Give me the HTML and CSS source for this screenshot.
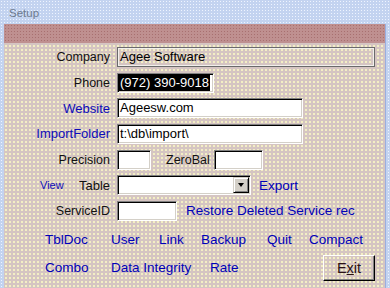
FILE: index.html
```html
<!DOCTYPE html>
<html>
<head>
  <title>Setup</title>
  <link rel="stylesheet" href="styles.css">
</head>
<body>
  <div class="window">
    <div class="titlebar">Setup</div>
    <div class="client">
      <div class="band"></div>

      <div class="rows">
        <div class="row">
          <div class="label">Company</div>
          <div class="field locked company">Agee Software</div>
        </div>
        <div class="row">
          <div class="label">Phone</div>
          <div class="field phone"><span class="selected">(972) 390-9018</span></div>
        </div>
        <div class="row">
          <div class="label link">Website</div>
          <div class="field wide">Ageesw.com</div>
        </div>
        <div class="row">
          <div class="label link">ImportFolder</div>
          <div class="field wide">t:\db\import\</div>
        </div>
        <div class="row">
          <div class="label">Precision</div>
          <div class="field precision"></div>
          <div class="label-inline">ZeroBal</div>
          <div class="field zerobal"></div>
        </div>
        <div class="row">
          <div class="label split"><span class="view">View</span><span>Table</span></div>
          <div class="field combo">
            <div class="combo-btn"><span class="arrow"></span></div>
          </div>
          <span class="action export">Export</span>
        </div>
        <div class="row">
          <div class="label">ServiceID</div>
          <div class="field serviceid"></div>
          <span class="action restore">Restore Deleted Service rec</span>
        </div>
      </div>

      <div class="links top">
        <span class="action">TblDoc</span>
        <span class="action">User</span>
        <span class="action">Link</span>
        <span class="action">Backup</span>
        <span class="action">Quit</span>
        <span class="action">Compact</span>
      </div>
      <div class="links bottom">
        <span class="action">Combo</span>
        <span class="action">Data Integrity</span>
        <span class="action">Rate</span>
        <button class="exit">E<u>x</u>it</button>
      </div>
    </div>
  </div>
</body>
</html>
```

FILE: styles.css
```css
html, body {
  margin: 0;
  padding: 0;
}

body {
  width: 390px;
  height: 288px;
  overflow: hidden;
  font-family: "Liberation Sans", Arial, sans-serif;
}

.window {
  height: 288px;
  display: flex;
  flex-direction: column;
  background-color: #c3d3f0;
  background-image: radial-gradient(circle, #eef4ff 0.9px, transparent 1px);
  background-size: 3px 3px;
}

.titlebar {
  height: 24px;
  box-sizing: border-box;
  padding: 5px 0 0 9px;
  font-size: 11.5px;
  line-height: 16px;
  color: #6d7a8e;
}

.client {
  flex: 1;
  margin: 0 5px 0 4px;
  background-color: #d5c5c2;
  background-image: radial-gradient(circle, #f3efc4 0.9px, transparent 1.1px);
  background-size: 4px 4px;
  box-shadow: 1px 0 0 #9aaee0;
}

.band {
  height: 19px;
  background-color: #bf9090;
  background-image: radial-gradient(circle, #a87070 0.9px, transparent 1px);
  background-size: 3px 3px;
}

.rows {
  margin-top: 4px;
  display: flex;
  flex-direction: column;
  gap: 5.67px;
}

.row {
  display: flex;
  align-items: center;
  height: 20px;
}

.label {
  width: 113px;
  box-sizing: border-box;
  padding-right: 7px;
  text-align: right;
  font-size: 12.5px;
  color: #111;
}

.label.link {
  font-size: 13px;
  color: #0c0cb8;
}

.label.split {
  display: flex;
  justify-content: space-between;
  align-items: center;
  padding-left: 36px;
  font-size: 13px;
}

.view {
  font-size: 11px;
  color: #0c0cb8;
}

.label-inline {
  margin-left: 15px;
  margin-right: 4px;
  font-size: 12.5px;
  color: #111;
}

.field {
  position: relative;
  height: 20px;
  box-sizing: border-box;
  padding-left: 2px;
  font-size: 13px;
  line-height: 17px;
  color: #000;
  background: #fff;
  border: 1px solid;
  border-color: #808080 #fff #fff #808080;
  box-shadow: inset 1px 1px #000, inset -1px -1px #d4d0c8;
}

.field.locked {
  background: transparent;
  border-color: #6a6a6a;
  box-shadow: inset 1px 1px #f2f0ec, inset -1px -1px #f2f0ec;
}

.company {
  width: 258px;
}

.phone {
  width: 97px;
  padding-left: 1px;
}

.selected {
  display: inline-block;
  padding: 0 1px;
  margin-top: 1px;
  line-height: 16px;
  background: #000;
  color: #fff;
}

.wide {
  width: 186px;
}

.precision {
  width: 34px;
}

.zerobal {
  width: 49px;
}

.combo {
  width: 134px;
}

.combo-btn {
  position: absolute;
  top: 1px;
  right: 1px;
  width: 16px;
  height: 16px;
  box-sizing: border-box;
  background: #d4d0c8;
  border: 1px solid;
  border-color: #d4d0c8 #000 #000 #d4d0c8;
  box-shadow: inset 1px 1px #fff, inset -1px -1px #808080;
  display: flex;
  align-items: center;
  justify-content: center;
}

.arrow {
  width: 0;
  height: 0;
  border-left: 3.5px solid transparent;
  border-right: 3.5px solid transparent;
  border-top: 4px solid #000;
}

.serviceid {
  width: 60px;
}

.action {
  font-size: 13.5px;
  color: #0000b8;
  white-space: nowrap;
}

.export {
  margin-left: 8px;
}

.restore {
  margin-left: 9px;
}

.links {
  display: grid;
  align-items: center;
  padding-left: 41px;
}

.links.top {
  margin-top: 9px;
  height: 20px;
  grid-template-columns: 66px 48px 42px 66px 42px auto;
}

.links.bottom {
  margin-top: 5px;
  height: 26px;
  grid-template-columns: 66px 99px 113px auto;
}

.exit {
  width: 52px;
  height: 26px;
  padding: 0;
  font-family: "Liberation Sans", Arial, sans-serif;
  font-size: 14.5px;
  color: #2a1414;
  background: transparent;
  border: 1px solid;
  border-color: #fff #000 #000 #fff;
  box-shadow: inset -1px -1px #808080;
}
```
